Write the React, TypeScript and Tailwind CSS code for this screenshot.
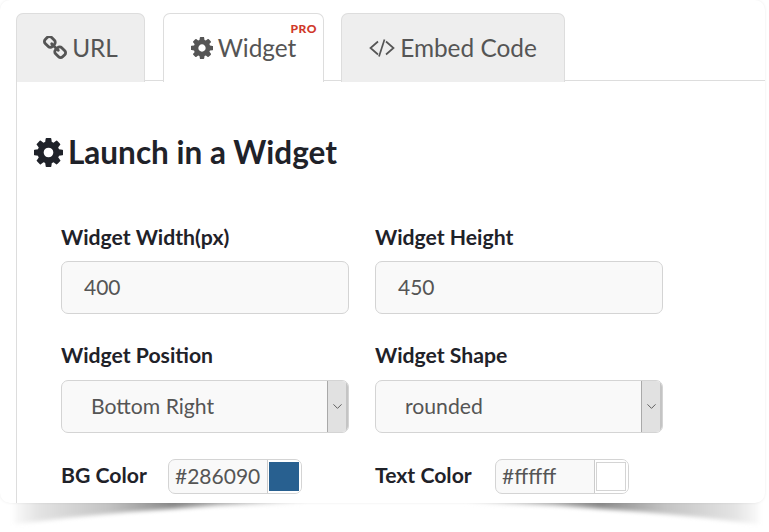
import React from 'react';
import { LuChevronDown } from 'react-icons/lu';

const font = { fontFamily: 'Lato, sans-serif' };

const CogIcon = ({ className }: { className: string }) => (
  <svg viewBox="128 128 1536 1536" className={className} fill="currentColor">
    <path d="M1152 896q0-106-75-181t-181-75-181 75-75 181 75 181 181 75 181-75 75-181zm512-109v222q0 12-8 23t-20 13l-185 28q-19 54-39 91 35 50 107 138 10 12 10 25t-9 23q-27 37-99 108t-94 71q-12 0-26-9l-138-108q-44 23-91 38-16 136-29 186-7 28-36 28h-222q-14 0-24.5-8.5t-11.5-21.5l-28-184q-49-16-90-37l-141 107q-10 9-25 9-14 0-25-11-126-114-165-168-7-10-7-23 0-12 8-23 15-21 51-66.5t54-70.5q-27-50-41-99l-183-27q-13-2-21-12.5t-8-23.5v-222q0-12 8-23t19-13l186-28q14-46 39-92-40-57-107-138-10-12-10-24 0-10 9-23 26-36 98.5-107.5t94.5-71.5q13 0 26 10l138 107q44-23 91-38 16-136 29-186 7-28 36-28h222q14 0 24.5 8.5t11.5 21.5l28 184q49 16 90 37l142-107q9-9 24-9 13 0 25 10 129 119 165 170 7 8 7 22 0 12-8 23-15 21-51 66.5t-54 70.5q26 50 41 98l183 28q13 2 21 12.5t8 23.5z" />
  </svg>
);

const LinkIcon = () => (
  <svg viewBox="80 80 1632 1632" className="w-[24px] h-[24px]" fill="currentColor">
    <path d="M1520 1216q0-40-28-68l-208-208q-28-28-68-28-42 0-72 32 3 3 19 18.5t21.5 21.5 15 19 13 25.5 3.5 27.5q0 40-28 68t-68 28q-15 0-27.5-3.5t-25.5-13-19-15-21.5-21.5-18.5-19q-33 31-33 73 0 40 28 68l206 207q27 27 68 27 40 0 68-26l147-146q28-28 28-67zm-703-705q0-40-28-68l-206-207q-28-28-68-28-39 0-68 27l-147 146q-28 28-28 67 0 40 28 68l208 208q27 27 68 27 42 0 72-31-3-3-19-18.5t-21.5-21.5-15-19-13-25.5-3.5-27.5q0-40 28-68t68-28q15 0 27.5 3.5t25.5 13 19 15 21.5 21.5 18.5 19q33-31 33-73zm895 705q0 120-85 203l-147 146q-83 83-203 83-121 0-204-85l-206-207q-83-83-83-203 0-123 88-209l-88-88q-86 88-208 88-120 0-204-84l-208-208q-84-84-84-204t85-203l147-146q83-83 203-83 121 0 204 85l206 207q83 83 83 203 0 123-88 209l88 88q86-88 208-88 120 0 204 84l208 208q84 84 84 204z" />
  </svg>
);

const CodeIcon = () => (
  <svg viewBox="0 0 26 18" className="w-[26px] h-[18px]" fill="none" stroke="currentColor" strokeWidth="1.7">
    <path d="M9 2.5 1.5 9 9 15.5" />
    <path d="M15.5 .5 10 17.5" />
    <path d="M17 2.5 24.5 9 17 15.5" />
  </svg>
);

const Tab = ({ width, active, children }: { width: string; active?: boolean; children: React.ReactNode }) => (
  <div
    className={`${width} ${
      active ? 'bg-white' : 'bg-[#eeeeee]'
    } relative h-[69px] -mb-px rounded-t-[7px] border border-b-0 border-[#dddddd] flex items-center justify-center gap-[5px] text-[24.4px] text-[#555555]`}
  >
    {children}
  </div>
);

const Field = ({ label, value }: { label: string; value: string }) => (
  <div className="w-[288px]">
    <div className="text-[21.2px] leading-[24px] font-bold text-[#1f2229] mb-[12px]">{label}</div>
    <div className="h-[53px] rounded-[7px] border border-[#d4d4d4] bg-[#f9f9f9] flex items-center pl-[22px] pb-[2px] text-[21px] text-[#555555]">
      {value}
    </div>
  </div>
);

const SelectField = ({ label, value }: { label: string; value: string }) => (
  <div className="w-[288px]">
    <div className="text-[21.2px] leading-[24px] font-bold text-[#1f2229] mb-[13px]">{label}</div>
    <div className="h-[53px] rounded-[7px] border border-[#d4d4d4] bg-[#f9f9f9] flex items-center justify-between pl-[29px] text-[21.2px] text-[#555555] overflow-hidden">
      <span>{value}</span>
      <span className="w-[21px] h-full bg-[#e1e1e1] border-l border-[#a9a9a9] border-r-2 border-r-[#c4c4c4] flex items-center justify-center">
        <LuChevronDown className="w-[15px] h-[15px] text-[#555555]" strokeWidth={1.5} />
      </span>
    </div>
  </div>
);

const ColorField = ({ label, value, swatch, labelWidth }: { label: string; value: string; swatch: string; labelWidth: string }) => (
  <div className="flex items-center">
    <div className={`${labelWidth} pb-[2px] text-[21.2px] font-bold text-[#1f2229]`}>{label}</div>
    <div className="w-[134px] h-[35px] rounded-[7px] border border-[#d4d4d4] bg-[#f9f9f9] flex items-center justify-between pl-[6px] text-[21px] text-[#555555] overflow-hidden">
      <span className="pb-[2px]">{value}</span>
      <span className="h-full border-l border-[#cccccc] bg-white py-[2px] pl-px pr-[2px] flex">
        <span className={`${swatch} w-[30px] h-full`} />
      </span>
    </div>
  </div>
);

export default function App() {
  return (
    <div style={font} className="relative w-[769px] h-[532px] overflow-hidden bg-white">
      {/* page-curl shadows under the card: blur sits on the wrapper so the clipped edge gets softened */}
      <div className="absolute left-[8px] top-[496px] w-[300px] h-[32px] blur-[2px]">
        <div className="w-full h-full bg-[linear-gradient(to_right,#ffffff_0%,#e4e4e4_10%,#c4c4c4_33%,#8a8a8a_55%,#bcbcbc_75%,#ffffff_100%)] [clip-path:polygon(2%_0,100%_0,100%_20%,70%_30%,40%_50%,20%_68%,2%_88%)]" />
      </div>
      <div className="absolute left-[465px] top-[496px] w-[300px] h-[32px] blur-[2px]">
        <div className="w-full h-full bg-[linear-gradient(to_left,#ffffff_0%,#e4e4e4_10%,#c4c4c4_33%,#8a8a8a_55%,#bcbcbc_75%,#ffffff_100%)] [clip-path:polygon(0_0,98%_0,98%_88%,80%_68%,60%_50%,30%_30%,0_20%)]" />
      </div>

      <div className="relative w-[765px] h-[503px] rounded-[10px] bg-white overflow-hidden shadow-[0_0_3px_rgba(0,0,0,0.08)] pl-4 pt-[13px]">
        <div className="flex border-b border-[#dddddd] h-[68px]">
          <Tab width="w-[129px]">
            <LinkIcon />
            <span>URL</span>
          </Tab>
          <div className="w-[18px] shrink-0" />
          <Tab width="w-[161px]" active>
            <CogIcon className="w-[22px] h-[22px]" />
            <span>Widget</span>
            <span className="absolute right-[6px] top-[8px] text-[12px] leading-[14px] font-black tracking-[0.5px] text-[#d0392b]">PRO</span>
          </Tab>
          <div className="w-[17px] shrink-0" />
          <Tab width="w-[224px]">
            <CodeIcon />
            <span>Embed Code</span>
          </Tab>
        </div>

        <div className="border-l border-[#dddddd] h-[422px] pl-[17px]">
          <div className="flex items-center gap-[5px] pt-[49px] text-[31.5px] leading-[44px] font-bold text-[#1f2229]">
            <CogIcon className="w-[29px] h-[29px]" />
            <span>Launch in a Widget</span>
          </div>

          <div className="pl-[27px] pt-[51px]">
            <div className="flex gap-[26px]">
              <Field label="Widget Width(px)" value="400" />
              <Field label="Widget Height" value="450" />
            </div>
            <div className="flex gap-[26px] mt-[29px]">
              <SelectField label="Widget Position" value="Bottom Right" />
              <SelectField label="Widget Shape" value="rounded" />
            </div>
            <div className="flex gap-[26px] mt-[26px]">
              <div className="w-[288px]">
                <ColorField label="BG Color" value="#286090" swatch="bg-[#286090]" labelWidth="w-[107px]" />
              </div>
              <ColorField label="Text Color" value="#ffffff" swatch="bg-white border border-[#d4d4d4]" labelWidth="w-[120px]" />
            </div>
          </div>
        </div>
      </div>
    </div>
  );
}
